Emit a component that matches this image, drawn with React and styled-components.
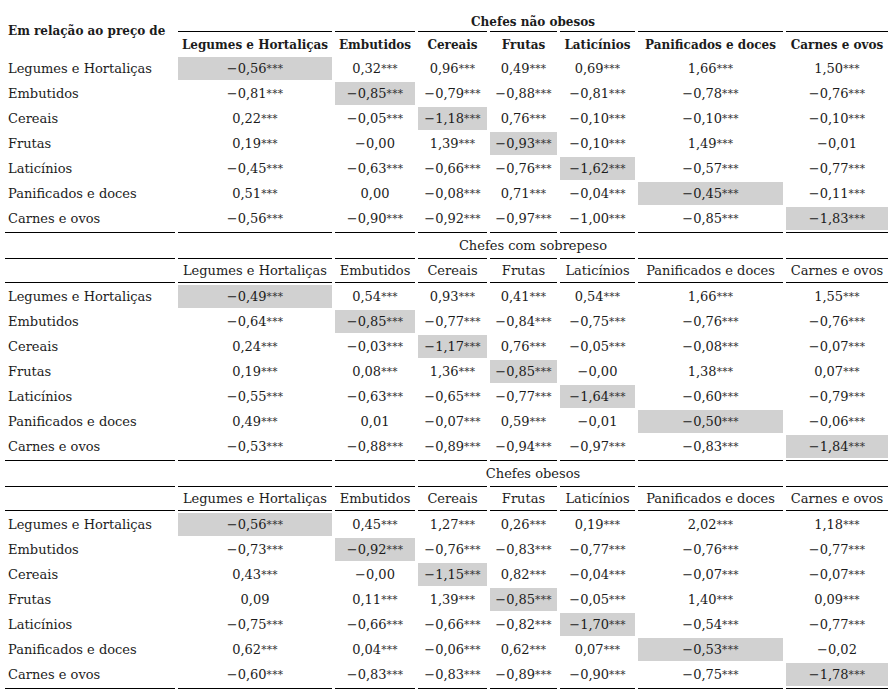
import React from 'react';
import styled, { createGlobalStyle } from 'styled-components';

const GlobalStyle = createGlobalStyle`
  html, body {
    margin: 0;
    padding: 0;
    background: #ffffff;
  }
  body {
    font-family: "DejaVu Serif", "Liberation Serif", serif;
    color: #1c1c1c;
  }
`;

// Layout
const Page = styled.div`
  padding: 0 0 0 2px;
`;

const Table = styled.table`
  border-collapse: separate;
  border-spacing: 3px 2px;
  table-layout: fixed;
  width: 889px;
  font-size: 13px;
`;

const TitleCell = styled.td`
  height: ${p => p.$h}px;
  padding: 0;
  text-align: center;
  vertical-align: ${p => (p.$bold ? 'bottom' : 'middle')};
  font-weight: ${p => (p.$bold ? 700 : 400)};
  font-size: ${p => (p.$bold ? '12px' : '13px')};
  white-space: nowrap;
`;

const CornerCell = styled.th`
  padding: 5px 0 0 3px;
  text-align: left;
  vertical-align: middle;
  font-weight: 700;
  font-size: 12px;
  white-space: nowrap;
`;

const HeadCell = styled.th`
  height: ${p => (p.$bold ? 24 : 25)}px;
  padding: ${p => (p.$bold ? '2px 0 0' : '0')};
  box-sizing: border-box;
  text-align: center;
  vertical-align: middle;
  font-weight: ${p => (p.$bold ? 700 : 400)};
  font-size: ${p => (p.$bold ? '12px' : '13px')};
  white-space: nowrap;
  border-top: 1px solid #000;
  border-bottom: ${p => (p.$under ? '1px solid #000' : 'none')};
`;

const RowLabel = styled.td`
  height: 23px;
  padding: 0 0 0 3px;
  text-align: left;
  vertical-align: middle;
  white-space: nowrap;
`;

const ValueCell = styled.td`
  height: 23px;
  padding: 0;
  text-align: center;
  vertical-align: middle;
  white-space: nowrap;
  background: ${p => (p.$hl ? '#d1d1d1' : 'transparent')};
`;

const Stars = styled.span`
  font-size: 10.5px;
  position: relative;
  top: -1px;
  letter-spacing: 0.3px;
  color: #333;
`;

const RuleCell = styled.td`
  height: 1px;
  padding: 0;
  background: #000;
  line-height: 0;
  font-size: 0;
`;

const widths = [170, 154, 80, 69, 67, 75, 145, 102];

const foods = [
  'Legumes e Hortaliças',
  'Embutidos',
  'Cereais',
  'Frutas',
  'Laticínios',
  'Panificados e doces',
  'Carnes e ovos',
];

const sections = [
  {
    title: 'Chefes não obesos',
    rows: [
      '−0,56*** 0,32*** 0,96*** 0,49*** 0,69*** 1,66*** 1,50***',
      '−0,81*** −0,85*** −0,79*** −0,88*** −0,81*** −0,78*** −0,76***',
      '0,22*** −0,05*** −1,18*** 0,76*** −0,10*** −0,10*** −0,10***',
      '0,19*** −0,00 1,39*** −0,93*** −0,10*** 1,49*** −0,01',
      '−0,45*** −0,63*** −0,66*** −0,76*** −1,62*** −0,57*** −0,77***',
      '0,51*** 0,00 −0,08*** 0,71*** −0,04*** −0,45*** −0,11***',
      '−0,56*** −0,90*** −0,92*** −0,97*** −1,00*** −0,85*** −1,83***',
    ],
  },
  {
    title: 'Chefes com sobrepeso',
    rows: [
      '−0,49*** 0,54*** 0,93*** 0,41*** 0,54*** 1,66*** 1,55***',
      '−0,64*** −0,85*** −0,77*** −0,84*** −0,75*** −0,76*** −0,76***',
      '0,24*** −0,03*** −1,17*** 0,76*** −0,05*** −0,08*** −0,07***',
      '0,19*** 0,08*** 1,36*** −0,85*** −0,00 1,38*** 0,07***',
      '−0,55*** −0,63*** −0,65*** −0,77*** −1,64*** −0,60*** −0,79***',
      '0,49*** 0,01 −0,07*** 0,59*** −0,01 −0,50*** −0,06***',
      '−0,53*** −0,88*** −0,89*** −0,94*** −0,97*** −0,83*** −1,84***',
    ],
  },
  {
    title: 'Chefes obesos',
    rows: [
      '−0,56*** 0,45*** 1,27*** 0,26*** 0,19*** 2,02*** 1,18***',
      '−0,73*** −0,92*** −0,76*** −0,83*** −0,77*** −0,76*** −0,77***',
      '0,43*** −0,00 −1,15*** 0,82*** −0,04*** −0,07*** −0,07***',
      '0,09 0,11*** 1,39*** −0,85*** −0,05*** 1,40*** 0,09***',
      '−0,75*** −0,66*** −0,66*** −0,82*** −1,70*** −0,54*** −0,77***',
      '0,62*** 0,04*** −0,06*** 0,62*** 0,07*** −0,53*** −0,02',
      '−0,60*** −0,83*** −0,83*** −0,89*** −0,90*** −0,75*** −1,78***',
    ],
  },
];

const Value = ({ text }) => {
  const i = text.indexOf('*');
  if (i < 0) return text;
  return (
    <>
      {text.slice(0, i)}
      <Stars>{text.slice(i)}</Stars>
    </>
  );
};

const Rule = () => (
  <tr>
    {widths.map((_, i) => (
      <RuleCell key={i} />
    ))}
  </tr>
);

const Section = ({ section, first }) => (
  <>
    {first ? (
      <>
        <tr>
          <CornerCell rowSpan={2}>Em relação ao preço de</CornerCell>
          <TitleCell colSpan={7} $h={27} $bold>
            {section.title}
          </TitleCell>
        </tr>
        <tr>
          {foods.map(f => (
            <HeadCell key={f} $bold>
              {f}
            </HeadCell>
          ))}
        </tr>
      </>
    ) : (
      <>
        <tr>
          <TitleCell />
          <TitleCell colSpan={7} $h={21}>
            {section.title}
          </TitleCell>
        </tr>
        <tr>
          <HeadCell $under />
          {foods.map(f => (
            <HeadCell key={f} $under>
              {f}
            </HeadCell>
          ))}
        </tr>
      </>
    )}
    {section.rows.map((row, r) => (
      <tr key={r}>
        <RowLabel>{foods[r]}</RowLabel>
        {row.split(' ').map((v, c) => (
          <ValueCell key={c} $hl={r === c}>
            <Value text={v} />
          </ValueCell>
        ))}
      </tr>
    ))}
    <Rule />
  </>
);

export default function App() {
  return (
    <Page>
      <GlobalStyle />
      <Table>
        <colgroup>
          {widths.map((w, i) => (
            <col key={i} style={{ width: w }} />
          ))}
        </colgroup>
        <tbody>
          {sections.map((s, i) => (
            <Section key={s.title} section={s} first={i === 0} />
          ))}
        </tbody>
      </Table>
    </Page>
  );
}
